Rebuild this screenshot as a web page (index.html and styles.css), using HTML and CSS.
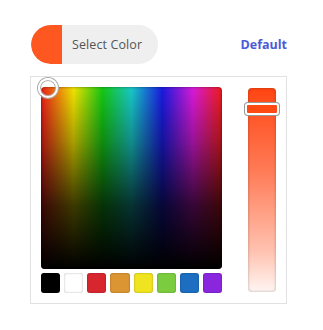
FILE: index.html
```html
<!DOCTYPE html>
<html>
<head>
<meta charset="utf-8">
<link rel="stylesheet" href="styles.css">
</head>
<body>
<div class="wrap">
  <div class="top">
    <button class="toggle"><span class="chip"></span><span class="label">Select Color</span></button>
    <a class="default">Default</a>
  </div>
  <div class="panel">
    <div class="left">
      <div class="sat">
        <div class="dark"></div>
        <div class="picker"></div>
      </div>
      <div class="swatches">
        <span class="sw" style="background:#000000"></span>
        <span class="sw" style="background:#ffffff"></span>
        <span class="sw" style="background:#d8262f"></span>
        <span class="sw" style="background:#dc9533"></span>
        <span class="sw" style="background:#efe41f"></span>
        <span class="sw" style="background:#7ccc3f"></span>
        <span class="sw" style="background:#1d6ec0"></span>
        <span class="sw" style="background:#8926de"></span>
      </div>
    </div>
    <div class="slider">
      <div class="thumb"></div>
    </div>
  </div>
</div>
</body>
</html>
```
FILE: styles.css
```css
html, body { margin: 0; padding: 0; background: #fff; }
body { font-family: "Open Sans", "Segoe UI", sans-serif; }
.wrap { padding: 25px 0 0 30px; width: 257px; }
.top { display: flex; align-items: center; justify-content: space-between; padding-left: 1px; }
.toggle {
  display: flex; align-items: center; height: 39px; width: 127px; padding: 0; border: 0;
  border-radius: 20px; background: #efefef; overflow: hidden; font: inherit; cursor: pointer;
}
.chip { width: 31px; height: 100%; background: #ff5720; border-radius: 20px 0 0 20px; }
.label { padding-left: 10px; font-size: 12.5px; color: #555; letter-spacing: 0.1px; }
.default { font-weight: 700; font-size: 12.5px; color: #4b5bd6; margin-top: -1px; }
.panel {
  margin-top: 12px; border: 1px solid #e2e2e2; padding: 10px; display: flex;
  justify-content: space-between; height: 206px;
}
.left { width: 181px; display: flex; flex-direction: column; gap: 4px; }
.sat {
  position: relative; height: 182px; border-radius: 4px;
  background: linear-gradient(to right, #f01c1a 0%, #f0e400 18%, #14c814 34%, #18c8c8 50%, #1a1ae0 67%, #d81ad8 84%, #f01c1a 100%);
}
.dark {
  position: absolute; inset: 0; border-radius: 4px;
  background: linear-gradient(to bottom, rgba(0,0,0,0) 0%, rgba(0,0,0,0.3) 30%, rgba(0,0,0,0.75) 65%, #000 100%);
  box-shadow: inset 0 0 3px rgba(0,0,0,0.5);
}
.picker {
  position: absolute; left: -3px; top: -9px; width: 16px; height: 16px; border-radius: 50%;
  border: 2px solid #fff; box-shadow: 0 0 0 1px #aaa, inset 0 0 0 1px #aaa;
}
.swatches { display: grid; grid-template-columns: repeat(8, 1fr); gap: 4px; }
.sw { height: 20px; border-radius: 3px; box-shadow: inset 0 0 2px rgba(0,0,0,0.35); }
.slider {
  position: relative; width: 28px; margin: 1px 0; border-radius: 4px;
  background: linear-gradient(to bottom, #ff4512 0%, #ff7a55 40%, #ffc2b0 80%, #fff6f3 100%);
  box-shadow: inset 0 0 3px rgba(0,0,0,0.3);
}
.thumb {
  position: absolute; left: -3px; top: 15px; width: 30px; height: 8px; border-radius: 3px;
  border: 2px solid #fff; box-shadow: 0 0 0 1px #999; background: #ff4a14;
}
```
